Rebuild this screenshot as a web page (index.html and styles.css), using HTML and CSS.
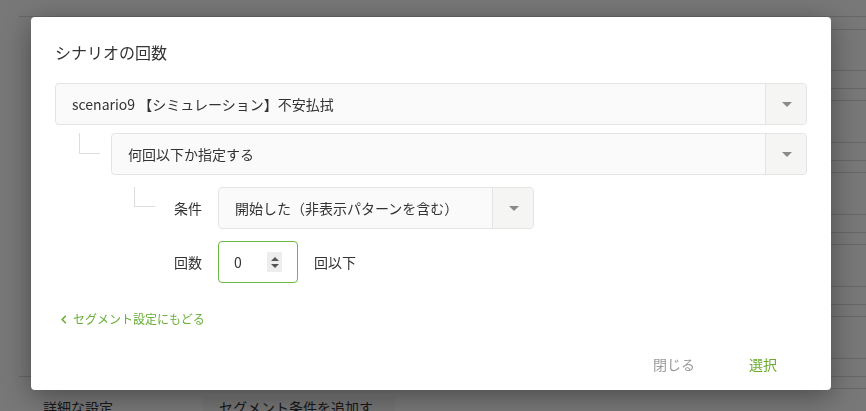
FILE: index.html
```html
<!DOCTYPE html>
<html lang="ja">
<head>
<meta charset="utf-8">
<title>シナリオの回数</title>
<link rel="stylesheet" href="styles.css">
</head>
<body>
<div class="page">
  <div class="main-col">
    <div class="top-line"></div>
    <div class="filler"></div>
    <div class="bottom-row">
      <span class="bg-label">詳細な設定</span>
      <span class="bg-button">セグメント条件を追加する</span>
    </div>
  </div>
  <div class="side-col"></div>
</div>
<div class="overlay"></div>
<div class="modal">
  <div class="modal-body">
    <h2 class="title">シナリオの回数</h2>
    <div class="select select-full">
      <span class="select-text">scenario9 【シミュレーション】不安払拭</span>
      <span class="select-arrow"><i class="tri"></i></span>
    </div>
    <div class="row row-2">
      <div class="connector"></div>
      <div class="select select-grow">
        <span class="select-text">何回以下か指定する</span>
        <span class="select-arrow"><i class="tri"></i></span>
      </div>
    </div>
    <div class="row row-3">
      <div class="connector connector-2"></div>
      <span class="label">条件</span>
      <div class="select select-cond">
        <span class="select-text">開始した（非表示パターンを含む）</span>
        <span class="select-arrow"><i class="tri"></i></span>
      </div>
    </div>
    <div class="row row-4">
      <span class="label">回数</span>
      <div class="number-input">
        <span class="num">0</span>
        <span class="spinner"><i class="up"></i><i class="down"></i></span>
      </div>
      <span class="suffix">回以下</span>
    </div>
    <a class="back-link" href="#"><svg class="chev" width="6" height="9" viewBox="0 0 6 9"><polyline points="4.8,0.8 1.2,4.5 4.8,8.2" fill="none" stroke="#6aae38" stroke-width="1.6"/></svg>セグメント設定にもどる</a>
  </div>
  <div class="modal-footer">
    <button class="btn btn-close">閉じる</button>
    <button class="btn btn-select">選択</button>
  </div>
</div>
</body>
</html>
```
FILE: styles.css
```css
* { box-sizing: border-box; }
html, body {
  margin: 0;
  padding: 0;
  width: 866px;
  height: 411px;
  overflow: hidden;
  font-family: "Noto Sans CJK JP", "Noto Sans", sans-serif;
  color: #333;
}

/* background page */
.page {
  display: grid;
  grid-template-columns: 1fr 66px;
  height: 411px;
  background: #fff;
}
.main-col {
  display: flex;
  flex-direction: column;
  padding-left: 19px;
}
.top-line {
  height: 17px;
  border-bottom: 1px solid #dcdcdc;
}
.filler { flex: 1; }
.bottom-row {
  height: 35px;
  border-top: 1px solid #dcdcdc;
  display: flex;
  align-items: flex-start;
  padding-top: 20px;
  font-size: 14px;
  color: #333;
  overflow: hidden;
}
.bg-label { margin-left: 24px; width: 160px; line-height: 20px; }
.bg-button {
  background: #f6f6f6;
  padding: 0 16px;
  line-height: 20px;
  height: 20px;
  width: 192px;
}
.side-col {
  background-image:
    linear-gradient(#dcdcdc, #dcdcdc),
    linear-gradient(#dcdcdc, #dcdcdc),
    repeating-linear-gradient(to bottom,
      #dcdcdc 0, #dcdcdc 1px, transparent 1px, transparent 18px,
      #dcdcdc 18px, #dcdcdc 19px, transparent 19px, transparent 30px,
      #dcdcdc 30px, #dcdcdc 31px, transparent 31px, transparent 72px);
  background-size: 100% 1px, 100% 1px, 100% 400px;
  background-position: 0 16px, 0 29px, 0 70px;
  background-repeat: no-repeat;
}

.overlay {
  position: fixed;
  inset: 0;
  background: rgba(0, 0, 0, 0.53);
}

/* modal */
.modal {
  position: absolute;
  left: 31px;
  top: 17px;
  width: 800px;
  height: 373px;
  background: #fff;
  border-radius: 4px;
  box-shadow: 0 6px 28px rgba(0, 0, 0, 0.38);
  display: flex;
  flex-direction: column;
}
.modal-body {
  padding: 23px 24px 0 24px;
  display: flex;
  flex-direction: column;
}
.title {
  margin: 0 0 19px 0;
  font-size: 16px;
  font-weight: normal;
  line-height: 24px;
  color: #333;
}
.select {
  height: 42px;
  border: 1px solid #e4e4e4;
  border-radius: 4px;
  background: #fafafa;
  display: flex;
  align-items: stretch;
  font-size: 14px;
}
.select-text {
  flex: 1;
  display: flex;
  align-items: center;
  padding-left: 16px;
  color: #333;
  white-space: nowrap;
}
.select-arrow {
  width: 41px;
  border-left: 1px solid #e4e4e4;
  background: #f5f6f4;
  display: flex;
  align-items: center;
  justify-content: center;
  border-radius: 0 4px 4px 0;
}
.tri {
  width: 0;
  height: 0;
  border-left: 5px solid transparent;
  border-right: 5px solid transparent;
  border-top: 5px solid #8a8a8a;
  margin-left: 1px;
}
.row {
  display: flex;
  align-items: flex-start;
}
.row-2 { margin-top: 8px; }
.row-3 { margin-top: 12px; }
.row-4 { margin-top: 12px; align-items: center; padding-left: 119px; }
.connector {
  width: 21px;
  height: 21px;
  margin-left: 24px;
  margin-right: 11px;
  border-left: 1px solid #dddddd;
  border-bottom: 1px solid #dddddd;
}
.connector-2 { margin-left: 79px; margin-right: 19px; height: 20px; }
.select-grow { flex: 1; }
.label {
  width: 44px;
  font-size: 14px;
  line-height: 42px;
  color: #333;
}
.select-cond { width: 316px; }
.number-input {
  width: 80px;
  height: 42px;
  border: 1px solid #6dbb44;
  border-radius: 4px;
  display: flex;
  align-items: center;
  padding-left: 15px;
  font-size: 14px;
}
.num { flex: 1; }
.spinner {
  width: 15px;
  height: 20px;
  margin-right: 15px;
  background: #ededed;
  display: flex;
  flex-direction: column;
  align-items: center;
  justify-content: center;
  gap: 3px;
}
.spinner .up {
  width: 0; height: 0;
  border-left: 4px solid transparent;
  border-right: 4px solid transparent;
  border-bottom: 4px solid #555;
}
.spinner .down {
  width: 0; height: 0;
  border-left: 4px solid transparent;
  border-right: 4px solid transparent;
  border-top: 4px solid #555;
}
.suffix {
  margin-left: 16px;
  font-size: 14px;
  color: #333;
}
.back-link {
  margin-top: 27px;
  margin-left: 6px;
  font-size: 12px;
  line-height: 18px;
  color: #6aae38;
  text-decoration: none;
  display: flex;
  align-items: center;
}
.chev {
  margin-right: 6px;
}
.modal-footer {
  margin-top: auto;
  height: 36px;
  display: flex;
  justify-content: flex-end;
  align-items: flex-start;
  padding-right: 30px;
  gap: 6px;
}
.btn {
  border: none;
  background: none;
  font-family: inherit;
  font-size: 14px;
  line-height: 20px;
  padding: 0 24px;
  cursor: pointer;
}
.btn-close { color: #999; }
.btn-select { color: #6aaa2e; }
```
